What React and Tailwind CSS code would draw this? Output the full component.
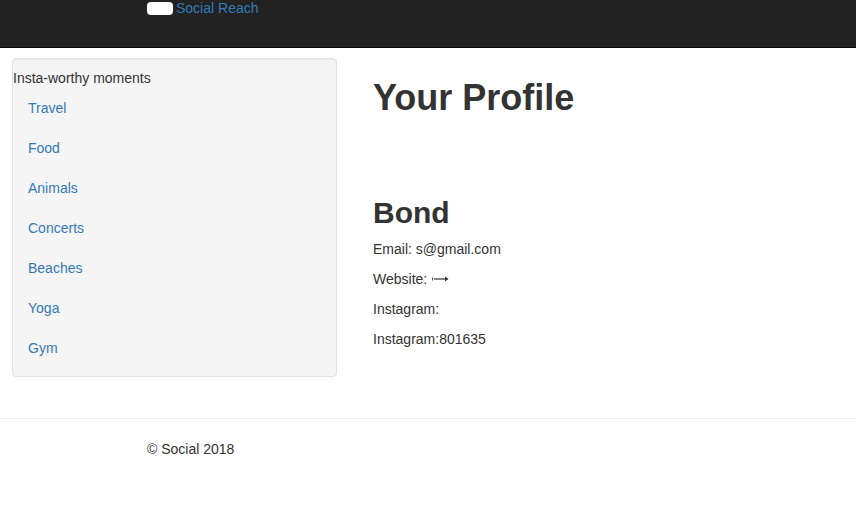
export default function App() {
  const links = ["Travel", "Food", "Animals", "Concerts", "Beaches", "Yoga", "Gym"];
  return (
    <div className="min-h-[525px] bg-white text-[14px] leading-[20px] text-[#333]" style={{ fontFamily: '"Liberation Sans", Arial, sans-serif' }}>
      <nav className="h-[48px] bg-[#222] border-b border-[#080808]">
        <div className="flex items-start pl-[147px] pt-[2px]">
          <span className="mt-0 block h-[13px] w-[26px] rounded-[4px] bg-white"></span>
          <a className="-mt-[4px] ml-[3px] text-[#337ab7]" href="#">Social Reach</a>
        </div>
      </nav>
      <div className="flex pt-[10px]">
        <div className="ml-[12px] w-[325px] shrink-0 rounded-[4px] border border-[#e3e3e3] bg-[#f5f5f5] pt-[9px] pb-[8px] shadow-[inset_0_1px_1px_rgba(0,0,0,0.05)]">
          <div className="">Insta-worthy moments</div>
          <ul>
            {links.map((l) => (
              <li key={l}>
                <a href="#" className="block px-[15px] py-[10px] text-[#337ab7]">{l}</a>
              </li>
            ))}
          </ul>
        </div>
        <div className="ml-[36px]">
          <h1 className="mt-[20px] text-[36px] font-bold leading-[39.6px]">Your Profile</h1>
          <h2 className="mt-[78px] mb-[10px] text-[30px] font-bold leading-[33px]">Bond</h2>
          <p className="mb-[10px]">Email: s@gmail.com</p>
          <p className="mb-[10px] flex items-center">
            Website:&nbsp;
            <svg width="18" height="8" viewBox="0 0 18 8" className="ml-[1px] mt-[1px]">
              <path d="M0.5 2.5v3" stroke="#555" strokeWidth="1" />
              <path d="M2 4h12" stroke="#333" strokeWidth="1.2" />
              <path d="M13 1.5l3.5 2.5-3.5 2.5z" fill="#333" />
            </svg>
          </p>
          <p className="mb-[10px]">Instagram:</p>
          <p className="mb-[10px]">Instagram:801635</p>
        </div>
      </div>
      <div className="mt-[41px] border-t border-[#eee]">
        <p className="pl-[147px] pt-[20px]">© Social 2018</p>
      </div>
    </div>
  );
}
